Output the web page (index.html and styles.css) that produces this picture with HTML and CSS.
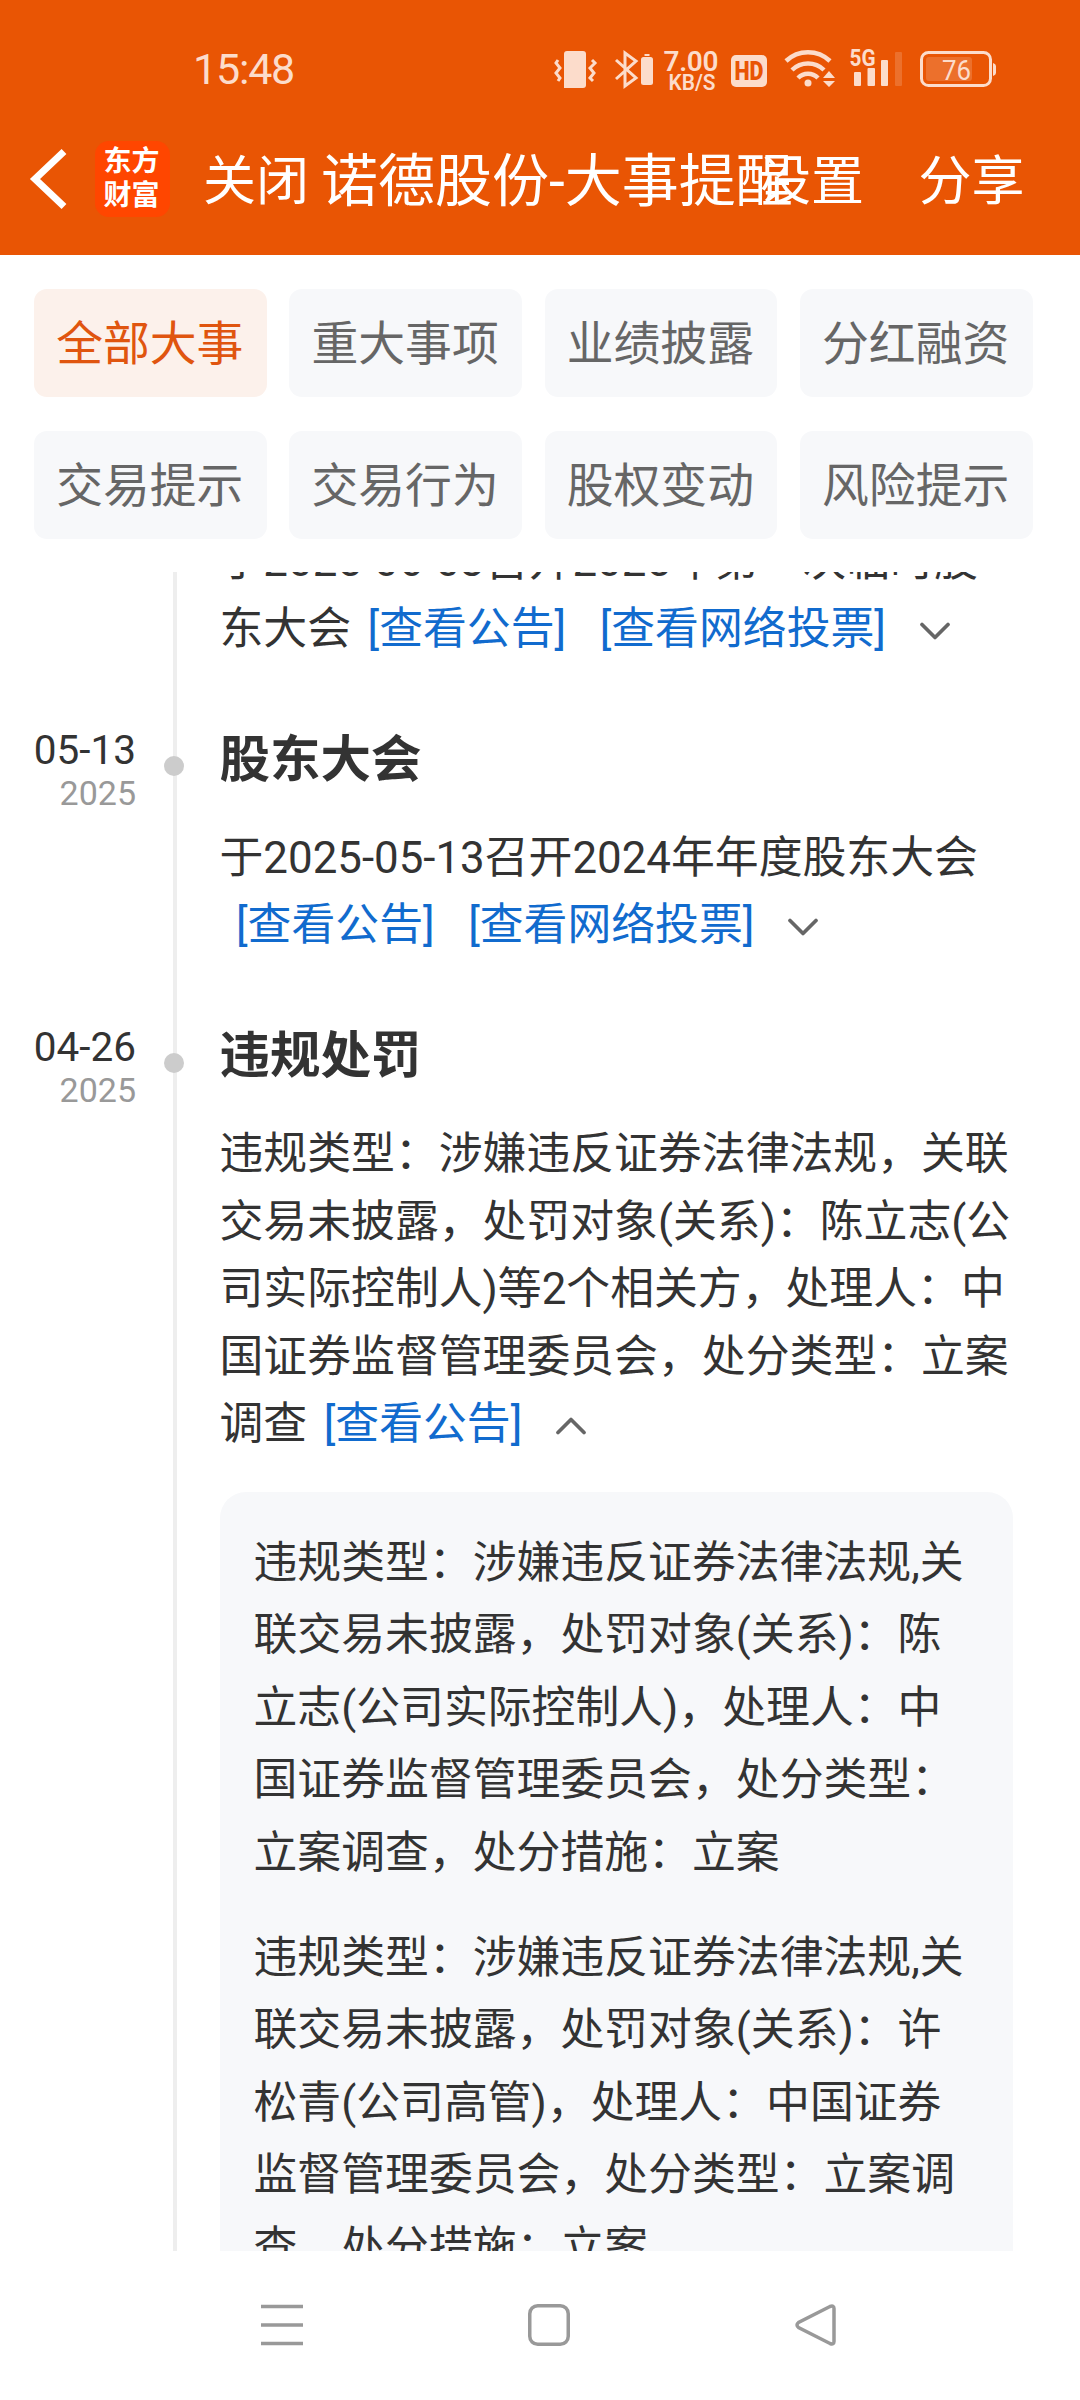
FILE: index.html
```html
<!DOCTYPE html>
<html lang="zh-CN">
<head>
<meta charset="utf-8">
<title>诺德股份-大事提醒</title>
<link rel="stylesheet" href="styles.css">
</head>
<body>
<div class="screen">
  <header class="top">
    <div class="status">
      <span class="clock">15:48</span>
      <svg class="status-icons" width="450" height="50" viewBox="550 45 450 50">
        <g fill="#fcdccb">
          <path d="M564 54q0-3 3-3h16q3 0 3 3v31q0 3-3 3h-19z"/>
          <path d="M558 60l-2 3 4 5-4 5 4 5-2 3M592 60l3 3-5 5 4 5-4 5 3 3" fill="none" stroke="#fcdccb" stroke-width="3"/>
          <path d="M616 60l20 18-11 8V53l11 8-20 18" fill="none" stroke="#fcdccb" stroke-width="3"/>
          <rect x="641" y="57" width="12" height="28" rx="2.5"/><rect x="644.500" y="54" width="5" height="2"/>
          <rect x="731" y="55" width="36" height="32" rx="5"/>
          <circle cx="808" cy="83" r="3.500"/>
          <path d="M798 78a14 14 0 0 1 20 0M792 70a23 23 0 0 1 32 0M786 61a32 32 0 0 1 44 0" fill="none" stroke="#fcdccb" stroke-width="4.500"/>
          <path d="M823 78l6-7 6 7zM823 81l6 6 6-6z"/>
          <rect x="854" y="72" width="7" height="14" rx="1"/><rect x="867.500" y="68" width="7.500" height="18" rx="1"/><rect x="881" y="60" width="7" height="26" rx="1"/>
          <rect x="895" y="52" width="7" height="34" rx="1" opacity=".2"/>
          <rect x="921.500" y="52.500" width="69" height="33" rx="7" fill="none" stroke="#fcdccb" stroke-width="3"/>
          <rect x="926" y="57" width="46" height="24" rx="3" opacity=".2"/>
          <path d="M993 63q3 1 3 3v7q0 2-3 3z"/>
        </g>
        <text class="st-rate" x="663.500" y="70.500" textLength="55">7.00</text>
        <text class="st-unit" x="668.500" y="89.500" textLength="47" lengthAdjust="spacingAndGlyphs">KB/S</text>
        <text class="st-hd" x="734.500" y="80" textLength="29" lengthAdjust="spacingAndGlyphs">HD</text>
        <text class="st-5g" x="849.500" y="66" textLength="26" lengthAdjust="spacingAndGlyphs">5G</text>
        <text class="st-bat" x="942" y="80" textLength="29" lengthAdjust="spacingAndGlyphs">76</text>
      </svg>
    </div>
    <nav class="bar">
      <svg class="back" width="40" height="66" viewBox="28 146 40 66"><path d="M64 151.500L35 179l29 27.500" fill="none" stroke="#fff" stroke-width="7"/></svg>
      <span class="logo">东方<br>财富</span>
      <span class="close">关闭</span>
      <h1 class="title">诺德股份-大事提醒</h1>
      <span class="action">设置</span>
      <span class="action">分享</span>
    </nav>
  </header>

  <section class="filters">
    <span class="chip active">全部大事</span><span class="chip">重大事项</span><span class="chip">业绩披露</span><span class="chip">分红融资</span>
    <span class="chip">交易提示</span><span class="chip">交易行为</span><span class="chip">股权变动</span><span class="chip">风险提示</span>
  </section>

  <main class="viewport">
    <div class="list">
      <article class="item">
        <div class="when"></div>
        <div class="rail"></div>
        <div class="body">
          <p class="text">于2025-06-03召开2025年第一次临时股<br>东大会<a class="link">[查看公告]</a><a class="link">[查看网络投票]</a><svg class="chev" viewBox="0 0 30 18"><path d="M2 2.500l13 13 13-13"/></svg></p>
        </div>
      </article>
      <article class="item">
        <div class="when"><span class="date">05-13</span><span class="year">2025</span></div>
        <div class="rail"><i class="dot"></i></div>
        <div class="body">
          <h2 class="head">股东大会</h2>
          <p class="text">于2025-05-13召开2024年年度股东大会<br><a class="link">[查看公告]</a><a class="link">[查看网络投票]</a><svg class="chev" viewBox="0 0 30 18"><path d="M2 2.500l13 13 13-13"/></svg></p>
        </div>
      </article>
      <article class="item">
        <div class="when"><span class="date">04-26</span><span class="year">2025</span></div>
        <div class="rail"><i class="dot"></i></div>
        <div class="body">
          <h2 class="head">违规处罚</h2>
          <p class="text">违规类型：涉嫌违反证券法律法规，关联<br>交易未披露，处罚对象(关系)：陈立志(公<br>司实际控制人)等2个相关方，处理人：中<br>国证券监督管理委员会，处分类型：立案<br>调查<a class="link">[查看公告]</a><svg class="chev" viewBox="0 0 30 18"><path d="M2 15.500l13-13 13 13"/></svg></p>
          <div class="card">
            <p>违规类型：涉嫌违反证券法律法规,关<br>联交易未披露，处罚对象(关系)：陈<br>立志(公司实际控制人)，处理人：中<br>国证券监督管理委员会，处分类型：<br>立案调查，处分措施：立案</p>
            <p>违规类型：涉嫌违反证券法律法规,关<br>联交易未披露，处罚对象(关系)：许<br>松青(公司高管)，处理人：中国证券<br>监督管理委员会，处分类型：立案调<br>查，处分措施：立案</p>
          </div>
        </div>
      </article>
    </div>
  </main>

  <footer class="sysnav">
    <svg width="42" height="42" viewBox="0 0 42 42"><path d="M0 2.500h42M0 21h42M0 39.500h42"/></svg>
    <svg width="42" height="42" viewBox="0 0 42 42"><rect x="1.750" y="1.750" width="38.500" height="38.500" rx="8"/></svg>
    <svg width="42" height="42" viewBox="0 0 42 42"><path d="M35 2.500L3.500 18.500q-3 2.500 0 5L35 39.500q4 1.500 4-2V4.500q0-3.500-4-2z"/></svg>
  </footer>
</div>
</body>
</html>
```
FILE: styles.css
```css
* { box-sizing: border-box; margin: 0; padding: 0; }
body {
  background: #fff;
  color: #333;
  font-family: Roboto, "Noto Sans CJK SC", sans-serif;
  text-spacing-trim: space-all;
}
.screen { width: 1080px; height: 2400px; display: flex; flex-direction: column; overflow: hidden; }

.top { height: 255px; flex: none; background: #e95504; color: #fff; }
.status { height: 95px; padding: 45px 80px 0 193px; display: flex; justify-content: space-between; }
.clock { font-size: 43px; line-height: 48px; letter-spacing: -1.2px; color: #fcdccb; }
.status-icons { flex: none; font-family: Roboto, sans-serif; }
.st-rate { font-size: 28px; font-weight: 600; fill: #fcdccb; }
.st-unit { font-size: 22px; font-weight: 600; fill: #fcdccb; }
.st-hd { font-size: 25px; font-weight: 900; fill: #e95504; }
.st-5g { font-size: 23px; font-weight: 700; fill: #fcdccb; }
.st-bat { font-size: 28px; fill: #fcdccb; }

.bar { height: 160px; padding: 46px 0 0 28px; display: flex; white-space: nowrap; }
.back { margin-top: 5px; flex: none; }
.logo {
  flex: none; width: 75px; height: 76px; margin-left: 27px; padding: 4px 2px 0 0;
  border-radius: 14px; background: #ff4600;
  font-size: 28px; line-height: 33.500px; font-weight: 700; text-align: center;
}
.close, .action, .title { font-weight: 400; line-height: 82px; flex: none; }
.close { font-size: 53px; margin-left: 33px; width: 118px; }
.title { font-size: 57px; width: 437px; }
.action { font-size: 53px; width: 160.500px; }

.filters {
  flex: none; padding: 34px 47.500px 0 34px; height: 316.700px;
  display: grid; grid-template-columns: repeat(4, 1fr); grid-auto-rows: 107.700px; gap: 34.300px 22.600px;
}
.chip {
  display: flex; align-items: center; justify-content: center; padding: 2px 1px 0 0;
  border-radius: 13px; background: #f7f8fa; color: #666; font-size: 46.800px; line-height: 68px;
}
.chip.active { background: #fcf1eb; color: #e0550f; }

.viewport { flex: none; height: 1679px; overflow: hidden; }
.list { margin-top: -46px; }
.item { display: flex; }
.when { width: 136px; flex: none; display: flex; flex-direction: column; align-items: flex-end; }
.date { font-size: 40.500px; line-height: 48px; margin-top: 2px; }
.year { font-size: 34px; line-height: 38px; color: #999; }
.rail { width: 4px; flex: none; margin-left: 37px; background: #eee; }
.dot { display: block; width: 20px; height: 20px; margin: 32px 0 0 -9px; border-radius: 50%; background: #ccc; }
.body { margin-left: 42.500px; padding-bottom: 61px; }
.head { font-size: 50.500px; line-height: 68px; padding-top: 1.500px; margin-bottom: 28.500px; font-weight: 700; }
.text { padding-top: 2.500px; font-size: 43.850px; line-height: 67.500px; white-space: nowrap; }
.link { color: #116bce; margin-left: 16.500px; }
.link + .link { margin-left: 33.500px; }
.chev { width: 30px; height: 18px; margin-left: 34px; vertical-align: 4px; }
.chev path { fill: none; stroke: #666; stroke-width: 3.700px; stroke-linecap: round; stroke-linejoin: round; }
.card {
  width: 793.500px; margin-top: 33.500px; padding: 34.500px 34px;
  border-radius: 26px; background: #f7f8fa;
  font-size: 43.850px; line-height: 72.500px; white-space: nowrap;
}
.card p + p { margin-top: 32.500px; }

.sysnav { flex: 1; display: flex; justify-content: space-between; padding: 53px 243.500px 0 261px; background: #fff; }
.sysnav svg { fill: none; stroke: #999; stroke-width: 3.500px; }
```
